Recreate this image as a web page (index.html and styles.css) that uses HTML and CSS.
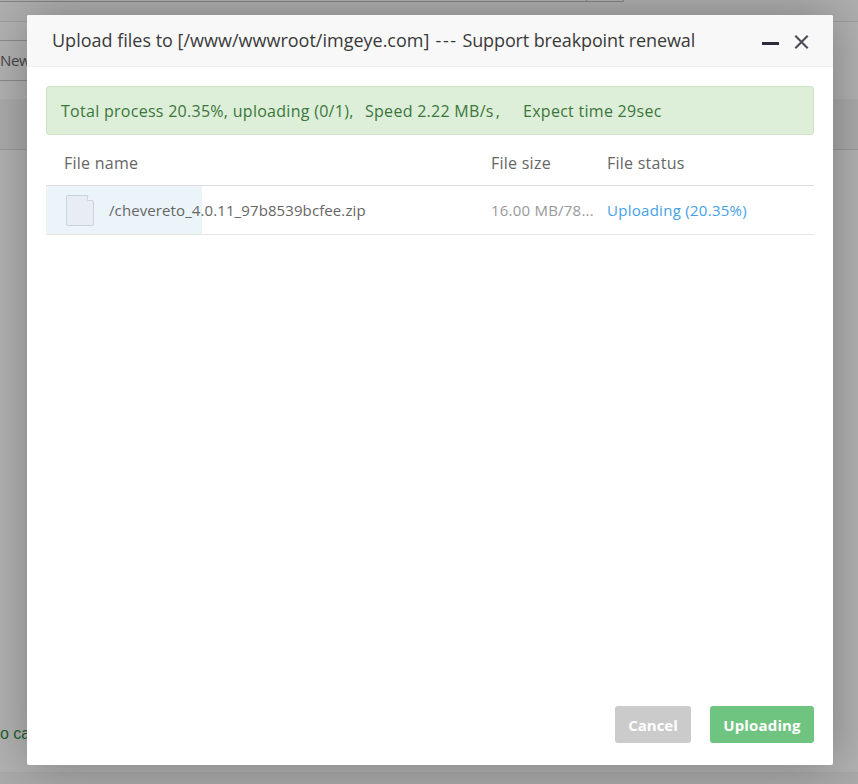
FILE: index.html
```html
<!DOCTYPE html>
<html lang="en">
<head>
<meta charset="utf-8">
<title>Upload files</title>
<link rel="stylesheet" href="styles.css">
</head>
<body>
<div class="page">
  <div class="path-bar"><div class="path-input"><div class="path-end"></div></div></div>
  <div class="toolbar"><div class="new-button">New</div></div>
  <div class="table-head"></div>
  <div class="table-body"><span class="tip">o ca</span></div>
  <div class="page-footer"></div>
</div>
<section class="modal">
  <header class="modal-header">
    <h1>Upload files to [/www/wwwroot/imgeye.com] <span class="dashes">---</span> <span class="note">Support breakpoint renewal</span></h1>
    <div class="window-actions">
      <svg width="18" height="16" viewBox="0 0 18 16"><path d="M0 9.500h17" stroke="#2d2c3b" stroke-width="3"/></svg>
      <svg width="16" height="16" viewBox="0 0 16 16"><path d="M1.300 1.800 13.700 14.200M13.700 1.800 1.300 14.200" stroke="#4c4b58" stroke-width="2.100"/></svg>
    </div>
  </header>
  <div class="modal-body">
    <div class="alert"><span class="total">Total process 20.35%, uploading (0/1),</span><span class="speed">Speed 2.22 MB/s<span class="comma">,</span></span><span class="expect">Expect time 29sec</span></div>
    <div class="row head"><span class="name">File name</span><span>File size</span><span>File status</span></div>
    <div class="row item">
      <span class="name">
        <svg width="28" height="31" viewBox="0 0 28 31"><path d="M2 .5h19l6.500 6V29q0 1.500-1.500 1.500H2Q.5 30.500.5 29V2Q.5.5 2 .5Z" fill="#e7edf2" stroke="#cbd3d9"/><path d="M21.500.5V5.500H27" fill="#f2f6f9" stroke="#cbd3d9"/></svg>
        <span class="file">/chevereto_4.0.11_97b8539bcfee.zip</span>
      </span>
      <span class="size">16.00 MB/78...</span><span class="status">Uploading (20.35%)</span>
    </div>
  </div>
  <footer class="modal-footer"><button class="cancel">Cancel</button><button class="upload">Uploading</button></footer>
</section>
</body>
</html>
```
FILE: styles.css
```css
* { box-sizing: border-box; }
body { margin: 0; height: 784px; overflow: hidden; position: relative; font: 16px "Open Sans", "Noto Sans", sans-serif; color: #666; }
.page { height: 784px; display: flex; flex-direction: column; background: #b2b2b2; }
.path-bar { height: 22px; border-bottom: 1px solid #a0a0a0; background: #afafaf; }
.path-input { width: 624px; height: 2px; display: flex; justify-content: flex-end; border: solid #858585; border-width: 0 1px 1px 0; border-radius: 0 0 3px 0; }
.path-end { width: 37px; border-left: 1px solid #858585; }
.toolbar { height: 77px; padding-top: 18px; }
.new-button { height: 41px; width: 60px; border: solid #8a8a8a; border-width: 1px 0; color: #484848; line-height: 39px; font-size: 15px; letter-spacing: -.4px; }
.table-head { height: 51px; background: #ababab; border-bottom: 1px solid #9b9b9b; }
.table-body { flex: 1; display: flex; align-items: flex-end; padding-bottom: 27px; border-bottom: 1px solid #a8a8a8; }
.tip { color: #21612f; font: 16px/22px "Liberation Sans", sans-serif; }
.page-footer { height: 11px; background: #aaa; }
.modal { position: absolute; left: 27px; top: 15px; width: 806px; height: 750px; display: flex; flex-direction: column; background: #fff; border-radius: 2px; box-shadow: 1px 1px 50px rgba(0,0,0,.3); }
.modal-header { height: 52px; padding: 0 23px 0 25px; display: flex; align-items: center; justify-content: space-between; background: #f8f8f8; border-bottom: 1px solid #eee; border-radius: 2px 2px 0 0; }
h1 { margin: 0; padding-bottom: 1px; font-size: 18px; font-weight: 400; color: #3a3a3a; white-space: nowrap; }
.dashes { margin-left: 1.5px; letter-spacing: 1.6px; }
.note { letter-spacing: -.12px; }
.window-actions { display: flex; gap: 14px; padding-top: 3px; }
.window-actions svg, .name svg { display: block; flex: none; }
.modal-body { flex: 1; padding: 19px 19px 0; }
.alert { height: 49px; padding-left: 14px; display: flex; align-items: center; background: #ddefd8; border: 1px solid #cfe5c4; border-radius: 3px; color: #3c763d; white-space: pre; letter-spacing: .28px; }
.total { width: 304px; }
.speed { width: 158px; }
.comma { margin-left: 2px; }
.row { display: grid; grid-template-columns: 445px 116px 1fr; align-items: center; white-space: nowrap; }
.head { height: 51px; padding-top: 5px; border-bottom: 1px solid #ddd; letter-spacing: .25px; }
.head .name { padding-left: 18px; }
.item { height: 49px; font-size: 15px; border-bottom: 1px solid #e6e6e6; background: linear-gradient(#eaf4f9, #eaf4f9) 0 0 / 20.35% 100% no-repeat; }
.item .name { display: flex; align-items: center; padding-left: 20px; gap: 15px; letter-spacing: .1px; }
.size { color: #999; letter-spacing: .22px; }
.status { color: #459fe8; letter-spacing: .28px; }
.modal-footer { display: flex; justify-content: flex-end; gap: 19px; padding: 0 19px 22px; }
button { height: 37px; padding: 0; border: 0; border-radius: 3px; color: #fff; font: 700 15px "Open Sans", sans-serif; }
.cancel { width: 76px; background: #cbcbcb; }
.upload { width: 104px; background: #6fc47f; letter-spacing: .15px; }
```
